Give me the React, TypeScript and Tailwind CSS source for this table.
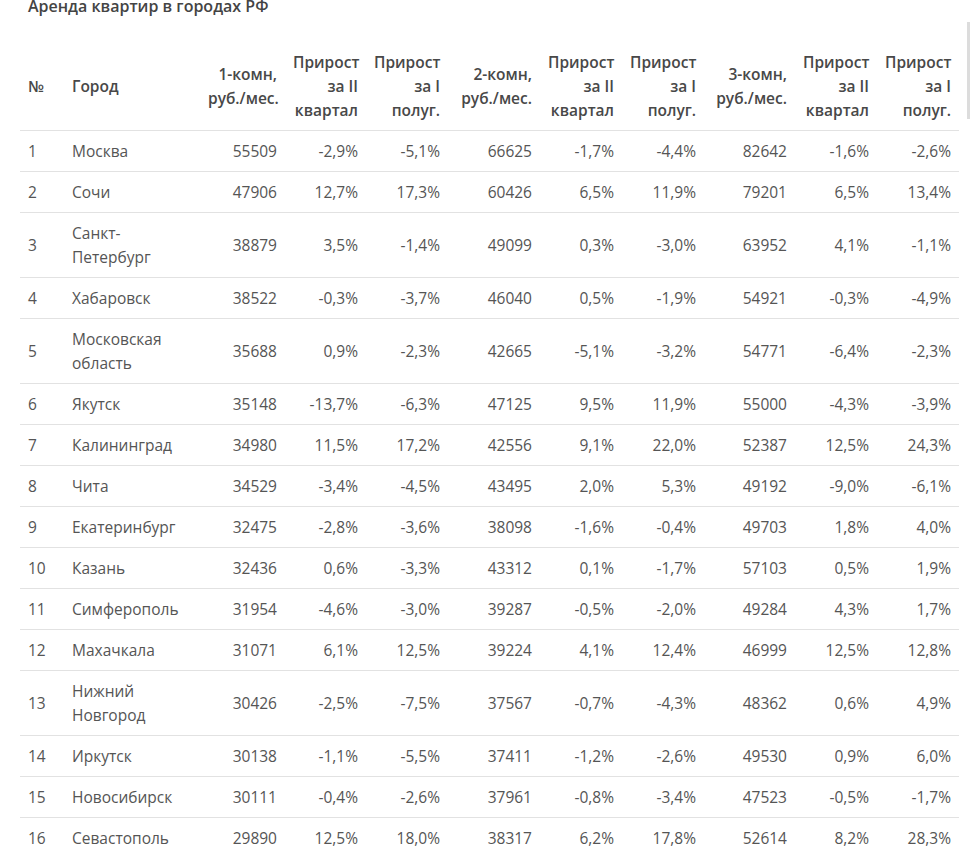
import React from "react";

type Row = [string, string, string, string, string, string, string, string, string, string, string];

const rows: Row[] = [
  ["1", "Москва", "55509", "-2,9%", "-5,1%", "66625", "-1,7%", "-4,4%", "82642", "-1,6%", "-2,6%"],
  ["2", "Сочи", "47906", "12,7%", "17,3%", "60426", "6,5%", "11,9%", "79201", "6,5%", "13,4%"],
  ["3", "Санкт-|Петербург", "38879", "3,5%", "-1,4%", "49099", "0,3%", "-3,0%", "63952", "4,1%", "-1,1%"],
  ["4", "Хабаровск", "38522", "-0,3%", "-3,7%", "46040", "0,5%", "-1,9%", "54921", "-0,3%", "-4,9%"],
  ["5", "Московская|область", "35688", "0,9%", "-2,3%", "42665", "-5,1%", "-3,2%", "54771", "-6,4%", "-2,3%"],
  ["6", "Якутск", "35148", "-13,7%", "-6,3%", "47125", "9,5%", "11,9%", "55000", "-4,3%", "-3,9%"],
  ["7", "Калининград", "34980", "11,5%", "17,2%", "42556", "9,1%", "22,0%", "52387", "12,5%", "24,3%"],
  ["8", "Чита", "34529", "-3,4%", "-4,5%", "43495", "2,0%", "5,3%", "49192", "-9,0%", "-6,1%"],
  ["9", "Екатеринбург", "32475", "-2,8%", "-3,6%", "38098", "-1,6%", "-0,4%", "49703", "1,8%", "4,0%"],
  ["10", "Казань", "32436", "0,6%", "-3,3%", "43312", "0,1%", "-1,7%", "57103", "0,5%", "1,9%"],
  ["11", "Симферополь", "31954", "-4,6%", "-3,0%", "39287", "-0,5%", "-2,0%", "49284", "4,3%", "1,7%"],
  ["12", "Махачкала", "31071", "6,1%", "12,5%", "39224", "4,1%", "12,4%", "46999", "12,5%", "12,8%"],
  ["13", "Нижний|Новгород", "30426", "-2,5%", "-7,5%", "37567", "-0,7%", "-4,3%", "48362", "0,6%", "4,9%"],
  ["14", "Иркутск", "30138", "-1,1%", "-5,5%", "37411", "-1,2%", "-2,6%", "49530", "0,9%", "6,0%"],
  ["15", "Новосибирск", "30111", "-0,4%", "-2,6%", "37961", "-0,8%", "-3,4%", "47523", "-0,5%", "-1,7%"],
  ["16", "Севастополь", "29890", "12,5%", "18,0%", "38317", "6,2%", "17,8%", "52614", "8,2%", "28,3%"],
];

const headers: string[][] = [
  ["№"],
  ["Город"],
  ["1-комн,", "руб./мес."],
  ["Прирост", "за II", "квартал"],
  ["Прирост", "за I", "полуг."],
  ["2-комн,", "руб./мес."],
  ["Прирост", "за II", "квартал"],
  ["Прирост", "за I", "полуг."],
  ["3-комн,", "руб./мес."],
  ["Прирост", "за II", "квартал"],
  ["Прирост", "за I", "полуг."],
];

const widths = ["w-[44px]", "w-[136px]", "w-[85px]", "w-[81px]", "w-[82px]", "w-[92px]", "w-[82px]", "w-[82px]", "w-[91px]", "w-[82px]", "w-[82px]"];

function Lines({ parts }: { parts: string[] }) {
  return (
    <>
      {parts.map((p, i) => (
        <React.Fragment key={i}>
          {i > 0 && <br />}
          {p}
        </React.Fragment>
      ))}
    </>
  );
}

export default function App() {
  return (
    <div className="relative min-h-[853px] bg-white overflow-hidden" style={{ fontFamily: '"Open Sans", "Noto Sans", sans-serif' }}>
      <div className="mt-[-6px] pl-[28px] text-[16px] leading-6 font-[600] text-[#444]">
        Аренда квартир в городах РФ
      </div>
      <div className="absolute left-[967px] top-[22px] h-[97px] w-[3px] bg-[#dcdcdc]" />
      <table className="ml-[20px] mt-[24px] table-fixed border-collapse w-[939px] text-[15.5px] leading-6">
        <colgroup>
          {widths.map((w, i) => (
            <col key={i} className={w} />
          ))}
        </colgroup>
        <thead>
          <tr className="border-b border-[#e2e2e2]">
            {headers.map((h, i) => (
              <th
                key={i}
                className={`px-2 py-2 align-middle font-[560] text-[#484848] whitespace-nowrap ${i < 2 ? "text-left" : "text-right"}`}
              >
                <Lines parts={h} />
              </th>
            ))}
          </tr>
        </thead>
        <tbody>
          {rows.map((r, ri) => (
            <tr key={ri} className="border-b border-[#e2e2e2]">
              {r.map((c, ci) => (
                <td
                  key={ci}
                  className={`px-2 py-2 align-middle text-[#555] whitespace-nowrap ${ci < 2 ? "text-left" : "text-right"}`}
                >
                  <Lines parts={c.split("|")} />
                </td>
              ))}
            </tr>
          ))}
        </tbody>
      </table>
    </div>
  );
}
